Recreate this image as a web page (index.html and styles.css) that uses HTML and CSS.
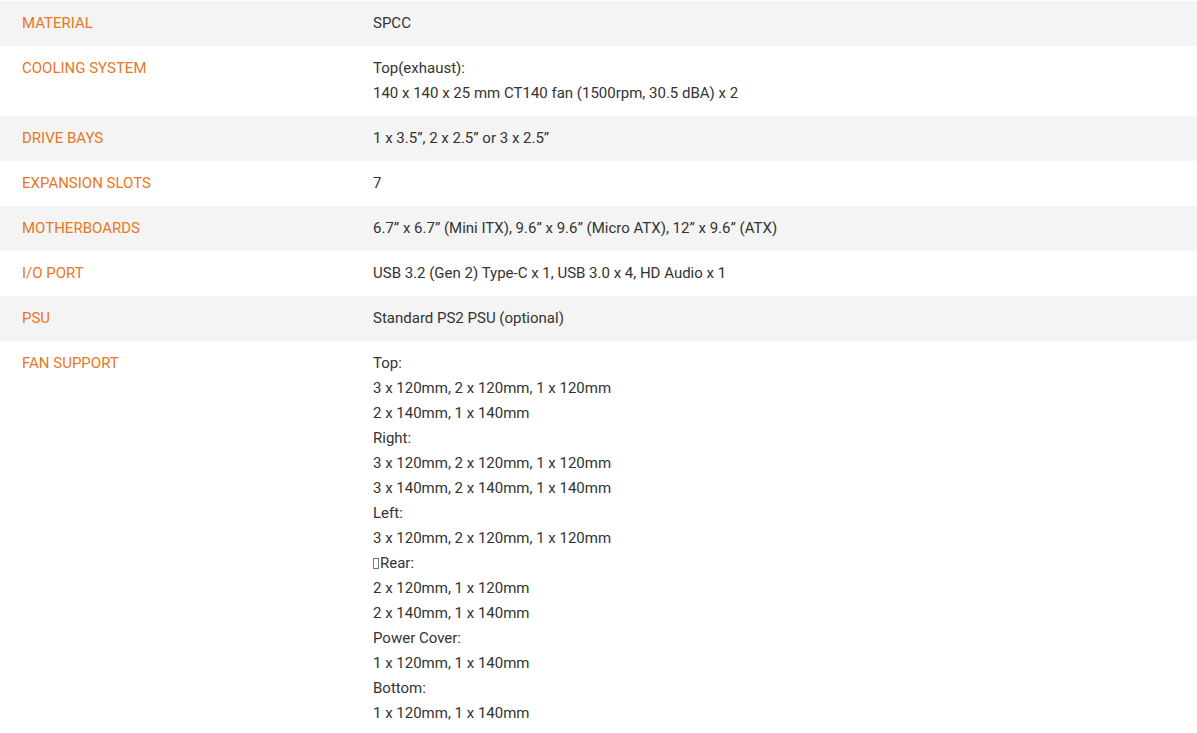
FILE: index.html
```html
<!DOCTYPE html>
<html>
<head>
<meta charset="utf-8">
<link rel="stylesheet" href="styles.css">
</head>
<body>
<table class="specs">
  <tr class="odd"><th>MATERIAL</th><td>SPCC</td></tr>
  <tr><th>COOLING SYSTEM</th><td>Top(exhaust):<br>140 x 140 x 25 mm CT140 fan (1500rpm, 30.5 dBA) x 2</td></tr>
  <tr class="odd"><th>DRIVE BAYS</th><td>1 x 3.5”, 2 x 2.5” or 3 x 2.5”</td></tr>
  <tr><th>EXPANSION SLOTS</th><td>7</td></tr>
  <tr class="odd"><th>MOTHERBOARDS</th><td>6.7” x 6.7” (Mini ITX), 9.6” x 9.6” (Micro ATX), 12” x 9.6” (ATX)</td></tr>
  <tr><th>I/O PORT</th><td>USB 3.2 (Gen 2) Type-C x 1, USB 3.0 x 4, HD Audio x 1</td></tr>
  <tr class="odd"><th>PSU</th><td>Standard PS2 PSU (optional)</td></tr>
  <tr><th>FAN SUPPORT</th><td>Top:<br>3 x 120mm, 2 x 120mm, 1 x 120mm<br>2 x 140mm, 1 x 140mm<br>Right:<br>3 x 120mm, 2 x 120mm, 1 x 120mm<br>3 x 140mm, 2 x 140mm, 1 x 140mm<br>Left:<br>3 x 120mm, 2 x 120mm, 1 x 120mm<br><span class="tofu"></span>Rear:<br>2 x 120mm, 1 x 120mm<br>2 x 140mm, 1 x 140mm<br>Power Cover:<br>1 x 120mm, 1 x 140mm<br>Bottom:<br>1 x 120mm, 1 x 140mm</td></tr>
</table>
</body>
</html>
```
FILE: styles.css
```css
html, body {
  margin: 0;
  padding: 0;
  background: #fff;
}
body {
  font-family: Roboto, "Liberation Sans", Arial, sans-serif;
  font-size: 15px;
  line-height: 25px;
  color: #333;
}
.specs {
  width: 100%;
  border-collapse: collapse;
  margin-top: 1px;
  table-layout: fixed;
}
.specs tr {
  background: #fff;
}
.specs tr.odd {
  background: #f4f4f4;
}
.specs th,
.specs td {
  padding: 10px 0;
  vertical-align: top;
  text-align: left;
  font-weight: 400;
}
.specs th {
  width: 351px;
  padding-left: 22px;
  color: #e8771f;
}
.specs td {
  color: #333;
}
.tofu {
  display: inline-block;
  width: 6px;
  height: 11px;
  border: 1px solid #777;
  margin-right: 1px;
  vertical-align: -1px;
  box-sizing: border-box;
}
```
